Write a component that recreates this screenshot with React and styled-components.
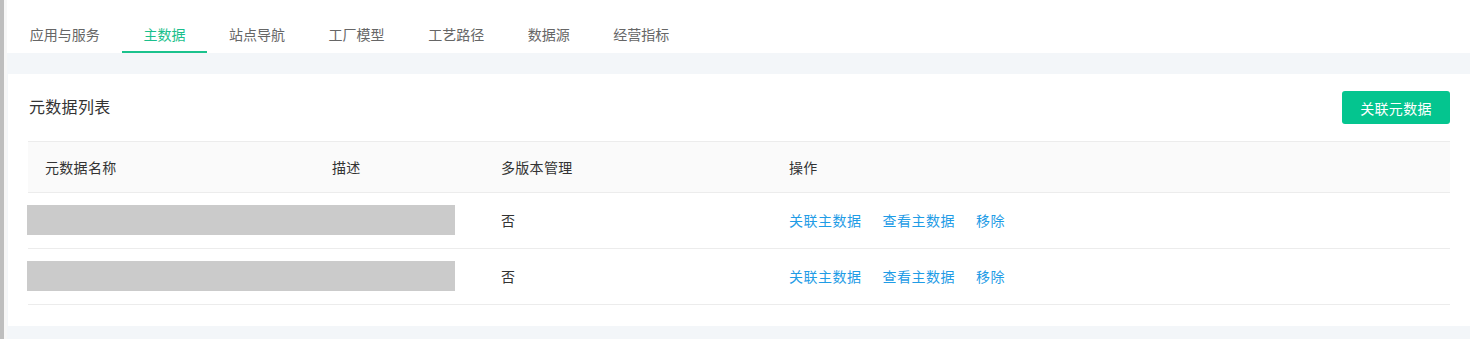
import React from "react";
import styled, { createGlobalStyle } from "styled-components";

const Global = createGlobalStyle`
  html, body { margin: 0; padding: 0; background: #ffffff; }
  body { font-family: "Noto Sans CJK SC", "Noto Sans", sans-serif; font-size: 14px; color: #333; }
  * { box-sizing: border-box; }
`;

const Shell = styled.div`
  display: flex;
  width: 1470px;
  height: 339px;
  overflow: hidden;
`;

const SideEdge = styled.div`
  flex: 0 0 7px;
  background: #bebebe;
  border-right: 3px solid #f7f7f7;
`;

const Main = styled.div`
  flex: 1;
  display: flex;
  flex-direction: column;
  background: #f3f6f9;
  min-width: 0;
`;

const TabBar = styled.div`
  display: flex;
  height: 53px;
  padding-left: 1px;
  background: #fff;
`;

const Tab = styled.div`
  height: 53px;
  padding: 23px 21.8px 0;
  line-height: 22px;
  font-size: 14px;
  color: ${(p) => (p.$active ? "#1bbf8c" : "#666")};
  border-bottom: 2px solid ${(p) => (p.$active ? "#1bc28d" : "transparent")};
  white-space: nowrap;
`;

const Content = styled.div`
  padding: 21px 0 14px 1px;
`;

const Card = styled.div`
  background: #fff;
  padding: 17px 20px 21px 20px;
`;

const CardHead = styled.div`
  display: flex;
  align-items: center;
  justify-content: space-between;
  height: 33px;
  margin-bottom: 17px;
`;

const Title = styled.div`
  font-size: 16px;
  color: #333;
  padding-left: 1px;
  padding-bottom: 3px;
  letter-spacing: 0.3px;
`;

const PrimaryButton = styled.button`
  width: 108px;
  height: 33px;
  border: none;
  border-radius: 3px;
  background: #04c58f;
  color: #fff;
  font-family: inherit;
  font-size: 14px;
  padding: 0;
  letter-spacing: 0.3px;
`;

const Table = styled.div`
  display: flex;
  flex-direction: column;
`;

const Row = styled.div`
  display: grid;
  grid-template-columns: 288px 169px 288px 1fr;
  align-items: center;
  height: ${(p) => (p.$head ? "52px" : "56px")};
  padding-bottom: ${(p) => (p.$head ? "0" : "2px")};
  background: ${(p) => (p.$head ? "#fafafa" : "#fff")};
  border-top: ${(p) => (p.$head ? "1px solid #ececec" : "none")};
  border-bottom: 1px solid #ececec;
`;

const Cell = styled.div`
  padding-left: ${(p) => (p.$first ? "17px" : "16px")};
  color: #333;
  font-size: 14px;
  letter-spacing: 0.3px;
`;

const Masked = styled.div`
  grid-column: 1 / span 2;
  width: 428px;
  height: 30px;
  margin-left: -1px;
  margin-top: 1px;
  background: #cbcbcb;
`;

const Actions = styled.div`
  display: flex;
  gap: 21px;
  padding-left: 16px;
`;

const LinkText = styled.span`
  color: #1f9ce6;
  font-size: 14px;
  letter-spacing: 0.5px;
`;

const tabs = ["应用与服务", "主数据", "站点导航", "工厂模型", "工艺路径", "数据源", "经营指标"];

export default function App() {
  return (
    <>
      <Global />
      <Shell>
        <SideEdge />
        <Main>
          <TabBar>
            {tabs.map((t) => (
              <Tab key={t} $active={t === "主数据"}>
                {t}
              </Tab>
            ))}
          </TabBar>
          <Content>
            <Card>
              <CardHead>
                <Title>元数据列表</Title>
                <PrimaryButton>关联元数据</PrimaryButton>
              </CardHead>
              <Table>
                <Row $head>
                  <Cell $first>元数据名称</Cell>
                  <Cell>描述</Cell>
                  <Cell>多版本管理</Cell>
                  <Cell>操作</Cell>
                </Row>
                {[0, 1].map((i) => (
                  <Row key={i}>
                    <Masked />
                    <Cell>否</Cell>
                    <Actions>
                      <LinkText>关联主数据</LinkText>
                      <LinkText>查看主数据</LinkText>
                      <LinkText>移除</LinkText>
                    </Actions>
                  </Row>
                ))}
              </Table>
            </Card>
          </Content>
        </Main>
      </Shell>
    </>
  );
}
